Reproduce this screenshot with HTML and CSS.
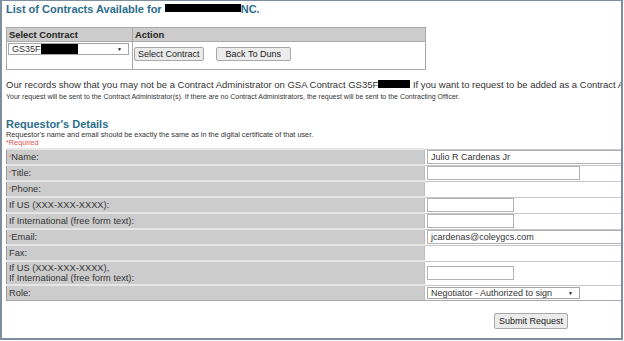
FILE: index.html
```html
<!DOCTYPE html>
<html>
<head>
    <meta name="viewport" content="width=device-width, initial-scale=1">
    <link rel="stylesheet" href="styles.css">
</head>
<body>
    <div class="frame">
        <h1 class="title">List of Contracts Available for <span class="redact redact-title"></span>NC.</h1>

        <table class="contract-table">
            <tr>
                <th class="col-select">Select Contract</th>
                <th>Action</th>
            </tr>
            <tr>
                <td class="col-select">
                    <div class="select select-contract">GS35F<span class="redact redact-select"></span><span class="arrow">&#9660;</span></div>
                </td>
                <td class="actions">
                    <button class="btn">Select Contract</button><button class="btn btn-back">Back To Duns</button>
                </td>
            </tr>
        </table>

        <p class="notice">Our records show that you may not be a Contract Administrator on GSA Contract GS35F<span class="redact redact-notice"></span> If you want to request to be added as a Contract Administrator, please fill in the form below.</p>
        <p class="notice-small">Your request will be sent to the Contract Administrator(s). If there are no Contract Administrators, the request will be sent to the Contracting Officer.</p>

        <h2 class="section-title">Requestor's Details</h2>
        <p class="hint">Requestor's name and email should be exactly the same as in the digital certificate of that user.</p>
        <p class="required">*Required</p>

        <table class="form-table">
            <tr>
                <td class="label"><span class="star">*</span>Name:</td>
                <td class="value"><div class="input input-full">Julio R Cardenas Jr</div></td>
            </tr>
            <tr>
                <td class="label"><span class="star">*</span>Title:</td>
                <td class="value"><div class="input input-wide"></div></td>
            </tr>
            <tr>
                <td class="label"><span class="star">*</span>Phone:</td>
                <td class="value"></td>
            </tr>
            <tr>
                <td class="label">If US (XXX-XXX-XXXX):</td>
                <td class="value"><div class="input input-short"></div></td>
            </tr>
            <tr>
                <td class="label">If International (free form text):</td>
                <td class="value"><div class="input input-short"></div></td>
            </tr>
            <tr>
                <td class="label"><span class="star">*</span>Email:</td>
                <td class="value"><div class="input input-full">jcardenas@coleygcs.com</div></td>
            </tr>
            <tr>
                <td class="label">Fax:</td>
                <td class="value"></td>
            </tr>
            <tr class="tall">
                <td class="label">If US (XXX-XXX-XXXX),<br>If International (free form text):</td>
                <td class="value"><div class="input input-short"></div></td>
            </tr>
            <tr>
                <td class="label">Role:</td>
                <td class="value"><div class="select select-role">Negotiator - Authorized to sign<span class="arrow">&#9660;</span></div></td>
            </tr>
        </table>

        <div class="submit-row">
            <button class="btn btn-submit">Submit Request</button>
        </div>
    </div>
</body>
</html>
```

FILE: styles.css
```css
body {
    margin: 0;
    background: white;
    font-family: "Liberation Sans", Arial, sans-serif;
    color: #333;
}
.frame {
    box-sizing: border-box;
    width: 623px;
    height: 340px;
    border: 2px solid #7d8e9e;
    border-top-width: 1px;
    padding: 2px 0 0 4px;
    overflow: hidden;
    white-space: nowrap;
}
.redact {
    display: inline-block;
    background: #000;
    vertical-align: top;
}
.title {
    margin: 0;
    font-size: 11px;
    line-height: 13px;
    color: #2b6d8b;
}
.redact-title {
    width: 76px;
    height: 8px;
    margin-top: 1px;
}
.contract-table {
    margin-top: 11px;
    width: 420px;
    border-collapse: collapse;
    border: 1px solid #a9a9a9;
}
.contract-table th {
    background: #cccccc;
    text-align: left;
    font-size: 9.4px;
    line-height: 13px;
    padding: 0 2px;
    color: #222;
    border: 1px solid #a9a9a9;
}
.contract-table td {
    border: 1px solid #a9a9a9;
    vertical-align: top;
    padding: 1px 0 0 1px;
    height: 22px;
}
.col-select {
    width: 121px;
}
.select {
    position: relative;
    box-sizing: border-box;
    height: 12px;
    border: 1px solid #a5a5a5;
    background: white;
    font-size: 9px;
    line-height: 10px;
    padding-left: 3px;
    color: #333;
}
.select-contract {
    width: 121px;
}
.redact-select {
    width: 37px;
    height: 10px;
}
.arrow {
    position: absolute;
    right: 6px;
    top: 0;
    font-size: 5px;
    line-height: 10px;
    color: #111;
}
.contract-table .actions {
    padding: 5px 0 0 1px;
    line-height: 13px;
}
.btn {
    font-family: "Liberation Sans", Arial, sans-serif;
    font-size: 9px;
    height: 14px;
    line-height: 12px;
    padding: 0 3px;
    background: #ebebeb;
    border: 1px solid #a8a8a8;
    border-radius: 2px;
    color: #222;
    margin: 0;
    vertical-align: top;
}
.btn-back {
    margin-left: 12px;
    padding: 0 9px;
}
.notice {
    margin: 9px 0 0;
    font-size: 9.5px;
    line-height: 11px;
}
.redact-notice {
    width: 32px;
    height: 8px;
    margin-top: 1px;
}
.notice-small {
    margin: 2px 0 0;
    font-size: 7px;
    line-height: 10px;
}
.section-title {
    margin: 16px 0 0;
    font-size: 11px;
    line-height: 12px;
    color: #2b6d8b;
}
.hint {
    margin: 0;
    font-size: 7.3px;
    line-height: 9px;
}
.required {
    margin: 0;
    font-size: 7.3px;
    line-height: 8px;
    color: #d9534f;
}
.form-table {
    width: 700px;
    border-collapse: collapse;
    border-left: 1px solid #9a9a9a;
    margin-top: 1px;
}
.form-table td {
    height: 14px;
    padding: 0;
    font-size: 9.3px;
    line-height: 10px;
    border-top: 2px solid #e6e6e6;
}
.form-table tr:last-child td {
    border-bottom: 1px solid #a8a8a8;
}
.form-table .label {
    width: 415px;
    background: #cccccc;
    padding-left: 2px;
    color: #333;
}
.form-table .value {
    background: white;
    padding-left: 2px;
    border-top: 1px solid #c6c6c6;
    border-left: 1px solid #bdbdbd;
}
.form-table .tall td {
    height: 22px;
}
.star {
    color: #d9534f;
    font-size: 6px;
    vertical-align: top;
}
.input {
    box-sizing: border-box;
    height: 14px;
    border: 1px solid #b3b3b3;
    background: white;
    font-size: 9px;
    line-height: 12px;
    padding-left: 3px;
    color: #333;
}
.input-full {
    width: 260px;
}
.input-wide {
    width: 153px;
}
.input-short {
    width: 87px;
}
.select-role {
    width: 153px;
    height: 12px;
}
.submit-row {
    padding: 12px 0 0 488px;
}
.btn-submit {
    height: 16px;
    padding: 0 4px;
}
```
